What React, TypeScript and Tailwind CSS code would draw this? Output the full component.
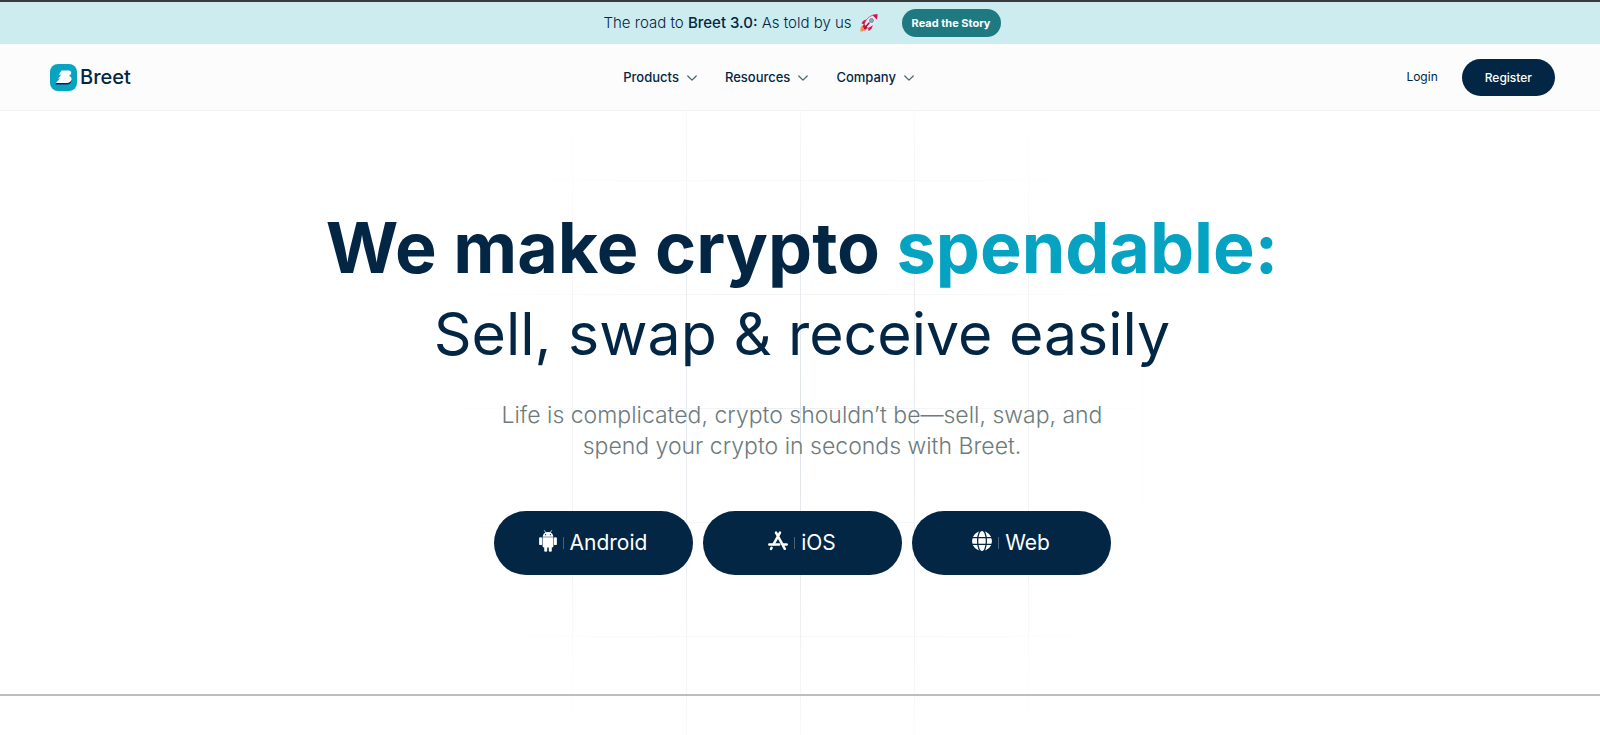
const navItems = [
  { id: "products", label: "Products" },
  { id: "resources", label: "Resources" },
  { id: "company", label: "Company" },
];

function LogoMark() {
  return (
    <svg width="27" height="27" viewBox="0 0 27 27" aria-hidden="true">
      <rect width="27" height="27" rx="8" fill="#09a3c2" />
      <path d="M6.500 18.500L5.500 20.500H16c3 0 5.500-1.600 5.500-4.600z" fill="#022644" />
      <path
        d="M11.500 6.500h7.300c1.700 0 2.700 1.100 2.400 2.600-.2 1.300-1 2.300-2.200 2.800 1.700.4 2.700 1.500 2.600 3.200-.1 2.300-1.800 3.900-4.200 3.900H5.800l4.200-4.600H8l3.300-3.600H8.800z"
        fill="#fff"
      />
    </svg>
  );
}

function Rocket() {
  return (
    <svg width="18" height="18" viewBox="0 0 36 36" aria-label="rocket" role="img">
      <path d="M3 19c2-5 6-8 12-8l-4 10zM25 20c1 7-2 11-8 14l-1-9z" fill="#d4144a" />
      <path d="M1 35c-1-4 0-10 4-12l8 8c-3 3-8 4-12 4z" fill="#ff8a50" />
      <path d="M35 1c-8-.5-15 3-20 8-4 4-6 9-7 13l6 6c5-1 10-4 13-7 5-5 9-12 8-20z" fill="#e4ebf2" />
      <path d="M35 1c-4-.3-7 .4-10 1.700l8.300 8.300C34.600 8 35.300 5 35 1zM8 20l-3 5 6 6 5-3z" fill="#d4144a" />
      <circle cx="23" cy="13" r="4" fill="#82aec0" stroke="#607d8b" strokeWidth="1.500" />
      <path d="M18 18L9 29" stroke="#b0103c" strokeWidth="3" strokeLinecap="round" />
      <path d="M35 1c-8-.5-15 3-20 8-4 4-6 9-7 13" fill="none" stroke="#d4144a" strokeWidth="1.300" />
    </svg>
  );
}

function Chevron() {
  return (
    <svg width="10" height="10" viewBox="0 0 10 10" fill="none" stroke="#4a626b" strokeWidth="1.200" aria-hidden="true">
      <path d="M.8 3L5 7.200 9.200 3" strokeLinecap="round" strokeLinejoin="round" />
    </svg>
  );
}

function AndroidIcon() {
  return (
    <svg width="18" height="22" viewBox="0 0 18 22" fill="#fff" aria-hidden="true">
      <path d="M5.500.7l1.400 2.200M12.500.7l-1.400 2.200" stroke="#fff" strokeWidth=".8" strokeLinecap="round" />
      <path d="M3.600 6.700C3.800 4 6 2.100 9 2.100s5.200 1.900 5.400 4.600z" />
      <path d="M3.600 7.200h10.800v9c0 .7-.5 1.200-1.200 1.200H4.800c-.7 0-1.200-.5-1.200-1.200z" />
      <rect x=".1" y="7.200" width="3" height="7.900" rx="1.200" />
      <rect x="14.900" y="7.200" width="3" height="7.900" rx="1.200" />
      <rect x="5.200" y="15" width="3" height="6.800" rx="1.300" />
      <rect x="9.800" y="15" width="3" height="6.800" rx="1.300" />
      <circle cx="6.600" cy="4.700" r=".6" fill="#022644" />
      <circle cx="11.400" cy="4.700" r=".6" fill="#022644" />
    </svg>
  );
}

function AppStoreIcon() {
  return (
    <svg width="20" height="22" viewBox="0 0 20 22" fill="none" stroke="#fff" strokeWidth="2.500" strokeLinecap="round" aria-hidden="true">
      <path d="M8 2.600l8.800 16.200M12 2.600L5.600 14.200M3.600 17.800L3 18.900" />
      <path d="M1.300 14.400h9.900M15.200 14.400h3.500" />
    </svg>
  );
}

function GlobeIcon() {
  return (
    <svg width="20" height="22" viewBox="0 0 20 22" aria-hidden="true">
      <circle cx="10" cy="11" r="10" fill="#fff" />
      <g fill="none" stroke="#022644" strokeWidth="1.300">
        <ellipse cx="10" cy="11" rx="4.400" ry="11" />
        <path d="M0 7.700h20M0 14.300h20" />
      </g>
    </svg>
  );
}

const downloads = [
  { label: "Android", icon: <AndroidIcon /> },
  { label: "iOS", icon: <AppStoreIcon /> },
  { label: "Web", icon: <GlobeIcon /> },
];

export default function App() {
  return (
    <div className="flex min-h-screen flex-col overflow-hidden bg-white font-[Inter,sans-serif] text-[#022644]">
      <div className="flex h-11 items-center justify-center gap-6 border-t-2 border-[#3a3a3c] bg-[#cdecf0] pl-1">
        <p className="flex items-center gap-2 text-[15px] font-light">
          <span>
            The road to <b className="font-medium">Breet 3.0:</b> As told by us
          </span>
          <Rocket />
        </p>
        <a href="#story" className="rounded-full bg-[#1e7a80] px-[10px] py-1 text-[11px] leading-5 font-bold text-white">
          Read the Story
        </a>
      </div>

      <header className="flex h-[67px] items-center justify-between border-b border-[#f1f1f1] bg-[#fcfcfc] pr-[45px] pl-[50px]">
        <a href="#home" className="flex items-center gap-[3px] text-xl font-medium">
          <LogoMark />
          Breet
        </a>
        <nav className="flex items-center gap-7 pt-[2px]">
          {navItems.map((item) => (
            <button key={item.id} type="button" className="flex items-center gap-2 text-[13px] font-medium">
              {item.label}
              <Chevron />
            </button>
          ))}
        </nav>
        <div className="flex items-center gap-6 text-xs">
          <a href="#login">Login</a>
          <button type="button" className="rounded-full bg-[#022644] px-[23px] py-2 leading-[21px] font-medium text-white">
            Register
          </button>
        </div>
      </header>

      <main className="relative flex flex-1 flex-col">
        {/* faded grid behind the hero */}
        <div className="pointer-events-none absolute inset-0 bg-[linear-gradient(to_right,#dde2e7_1px,transparent_1px),linear-gradient(to_bottom,#eceff2_1px,transparent_1px)] bg-[size:114px_114px] bg-[position:calc(50%+57px)_69px] [mask-image:radial-gradient(ellipse_370px_400px_at_50%_50%,black,transparent)]" />

        <section className="relative flex flex-col items-center border-b-2 border-[#bdbdbd] pt-[93px] pb-[119px] pl-1 text-center">
          <h1>
            <span className="block text-[70px] leading-[88px] font-bold">
              We make crypto <span className="text-[#05a2c2]">spendable:</span>
            </span>
            <span className="block text-[59px] leading-[84px] font-normal">Sell, swap &amp; receive easily</span>
          </h1>
          <p className="mt-6 max-w-[640px] text-[23px] leading-[31px] font-light text-[#6d7b7c]">
            Life is complicated, crypto shouldn’t be—sell, swap, and spend your crypto in seconds with Breet.
          </p>
          <div className="mt-[49px] flex gap-[10px]">
            {downloads.map((item) => (
              <button
                key={item.label}
                type="button"
                className="flex h-16 w-[199px] items-center justify-center gap-[6px] rounded-full bg-[#022644] text-[21px] text-white"
              >
                <span className="pb-1">{item.icon}</span>
                <span className="h-3 w-px bg-[#4a6075]" />
                {item.label}
              </button>
            ))}
          </div>
        </section>
      </main>
    </div>
  );
}
